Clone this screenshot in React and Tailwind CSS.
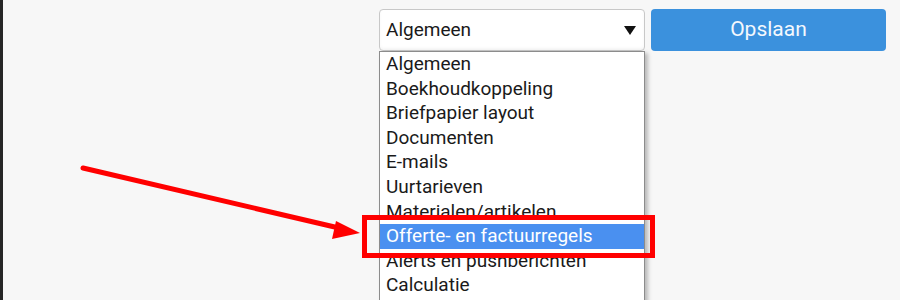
import { useState } from "react"

const options = [
  "Algemeen",
  "Boekhoudkoppeling",
  "Briefpapier layout",
  "Documenten",
  "E-mails",
  "Uurtarieven",
  "Materialen/artikelen",
  "Offerte- en factuurregels",
  "Alerts en pushberichten",
  "Calculatie",
]

export default function App() {
  const [selected] = useState("Algemeen")
  const highlighted = "Offerte- en factuurregels"

  return (
    <div className="relative h-[300px] w-[900px] overflow-hidden border-l-[3px] border-[#262626] bg-[#f7f7f7] font-['Roboto',sans-serif]">
      <div className="flex justify-end gap-[6px] pr-[14px] pt-[9px]">
        <div className="relative w-[266px]">
          <div className="flex h-[42px] items-center justify-between rounded-[4px] border border-[#c8c8c8] bg-white pl-[6px] pr-[8px] text-[19px] text-[#1a1a1a] shadow-[inset_0_-2px_3px_rgba(0,0,0,0.04)]">
            <span>{selected}</span>
            <svg width="12" height="9" viewBox="0 0 12 9">
              <path d="M0 0 H12 L6 9 Z" fill="#111" />
            </svg>
          </div>

          <ul className="absolute left-0 top-[42px] z-10 h-[260px] w-[266px] border border-[#8c8c8c] bg-white text-[19px] leading-[24.6px] text-[#1a1a1a] shadow-[3px_2px_4px_rgba(0,0,0,0.25)]">
            {options.map((opt) => (
              <li
                key={opt}
                className={
                  opt === highlighted
                    ? "bg-[#4a90f0] pl-[6px] text-white"
                    : "pl-[6px]"
                }
              >
                {opt}
              </li>
            ))}
          </ul>
        </div>

        <button className="h-[42px] w-[235px] rounded-[4px] bg-[#3b91dd] text-[21px] text-[#f3f8fd]">
          Opslaan
        </button>
      </div>

      {/* annotation: highlight box */}
      <div className="pointer-events-none absolute left-[359px] top-[215px] z-20 h-[43px] w-[293px] border-[5px] border-[#ff0000]" />

      {/* annotation: arrow */}
      <svg
        className="pointer-events-none absolute left-0 top-0 z-20"
        width="900"
        height="300"
        viewBox="0 0 900 300"
      >
        <line x1="80" y1="168" x2="336" y2="228" stroke="#ff0000" strokeWidth="5" strokeLinecap="round" />
        <path d="M357 233 L333 221 L329 239 Z" fill="#ff0000" />
      </svg>
    </div>
  )
}
